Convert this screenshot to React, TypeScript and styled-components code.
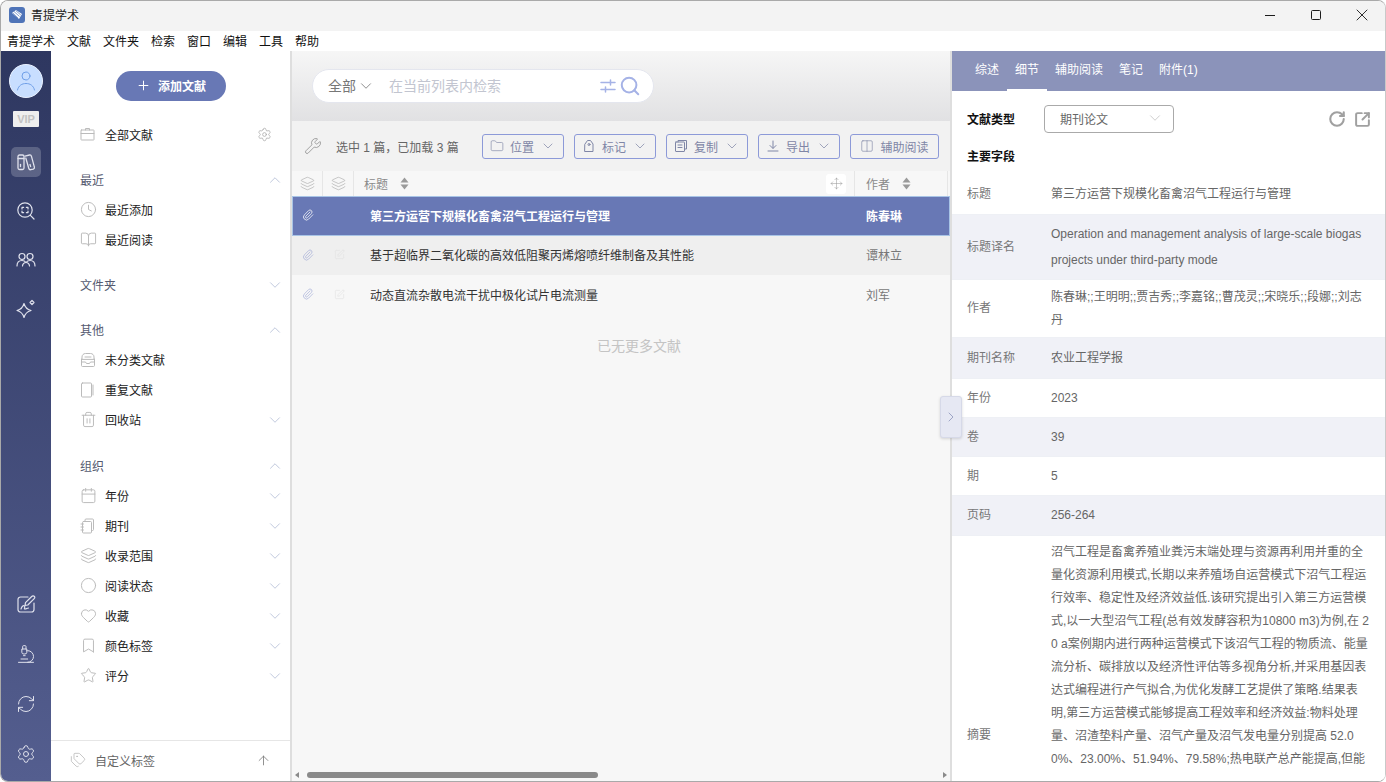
import React from "react";
import styled, { createGlobalStyle } from "styled-components";
import {
  ArrowUp,
  Bookmark,
  BookOpen,
  Calendar,
  ChevronDown,
  ChevronRight,
  ChevronUp,
  Circle,
  Clock,
  Columns2,
  Folder,
  Heart,
  Layers,
  Microscope,
  Move,
  Paperclip,
  Plus,
  RefreshCw,
  RotateCw,
  Search,
  Settings,
  SquareArrowOutUpRight,
  SquarePen,
  Star,
  Tags,
  Trash2,
  Wrench,
  X,
} from "lucide-react";

const GlobalStyle = createGlobalStyle`
  html, body {
    margin: 0;
    padding: 0;
    height: 100%;
    background: #fff;
    overflow: hidden;
  }
  body {
    font-family: "Liberation Sans", "Noto Sans CJK SC", sans-serif;
    font-size: 12px;
  }
  * { box-sizing: border-box; }
`;

const Window = styled.div`
  width: 1386px;
  height: 782px;
  display: flex;
  flex-direction: column;
  border: 1px solid #a9a9a9;
  border-right-color: #c9c9c9;
  border-radius: 8px;
  overflow: hidden;
  background: #fff;
`;

const TitleBar = styled.div`
  height: 30px;
  flex: none;
  display: flex;
  align-items: center;
  padding: 0 0 2px 8px;
  background: #f3f3f3;
  color: #222;
`;

const AppName = styled.span`
  margin: 0 0 2px 6px;
`;

const WinControls = styled.div`
  margin-left: auto;
  display: flex;
  height: 100%;
  align-items: center;
  color: #1c1c1c;
`;

const WinButton = styled.div`
  width: 46px;
  display: flex;
  justify-content: center;
`;

const MinBar = styled.div`
  width: 10px;
  height: 1px;
  background: #1c1c1c;
`;

const MaxBox = styled.div`
  width: 10px;
  height: 10px;
  border: 1px solid #1c1c1c;
  border-radius: 1.5px;
`;

const MenuBar = styled.div`
  height: 20px;
  flex: none;
  display: flex;
  align-items: center;
  gap: 12px;
  padding: 0 0 2px 6px;
  color: #111;
`;

const Body = styled.div`
  flex: 1;
  min-height: 0;
  display: flex;
  position: relative;
`;

const Rail = styled.div`
  width: 50px;
  flex: none;
  display: flex;
  flex-direction: column;
  align-items: center;
  padding-top: 13px;
  background: linear-gradient(180deg, #2e3760 0%, #545e8f 100%);
  color: #dfe1ec;
`;

const Avatar = styled.div`
  width: 34px;
  height: 34px;
  border-radius: 50%;
  background: #c8deff;
  border: 1px solid #e9f1ff;
  color: #6f9fe8;
  display: flex;
  align-items: center;
  justify-content: center;
`;

const VipBadge = styled.div`
  width: 26px;
  height: 16px;
  margin-top: 13px;
  background: #eeeeee;
  color: #c2c2c2;
  border-radius: 1px;
  font-size: 11px;
  font-weight: 700;
  line-height: 16px;
  text-align: center;
`;

const RailIcon = styled.div<{ $active?: boolean }>`
  width: 30px;
  height: 30px;
  flex: none;
  display: flex;
  align-items: center;
  justify-content: center;
  border-radius: 5px;
  background: ${(p) => (p.$active ? "rgba(255,255,255,0.2)" : "transparent")};
`;

const RailTop = styled.div`
  display: flex;
  flex-direction: column;
  align-items: center;
  gap: 19px;
  margin-top: 20px;
`;

const RailBottom = styled.div`
  margin-top: auto;
  display: flex;
  flex-direction: column;
  align-items: center;
  gap: 20px;
  padding-bottom: 12px;
`;

const Sidebar = styled.div`
  width: 241px;
  flex: none;
  display: flex;
  flex-direction: column;
  background: #fff;
  border-right: 2px solid #dedede;
`;

const SideScroll = styled.div`
  flex: 1;
  padding-top: 20px;
`;

const AddButton = styled.div`
  width: 110px;
  height: 30px;
  margin-left: 65px;
  margin-bottom: 19px;
  padding-bottom: 2px;
  border-radius: 15px;
  background: #6878b5;
  color: #fff;
  font-weight: 700;
  display: flex;
  align-items: center;
  justify-content: center;
  gap: 7px;
`;

const NavRow = styled.div<{ $head?: boolean; $gap?: number }>`
  height: 30px;
  margin-top: ${(p) => p.$gap ?? 0}px;
  display: flex;
  align-items: center;
  padding: 0 6px 1px 29px;
  color: ${(p) => (p.$head ? "#555a70" : "#222")};
`;

const NavIcon = styled.span`
  width: 25px;
  flex: none;
  display: flex;
  color: #bbbbbb;
`;

const NavEnd = styled.span<{ $tone?: string; $inset?: number }>`
  margin-left: auto;
  margin-right: ${(p) => p.$inset ?? 0}px;
  display: flex;
  color: ${(p) => p.$tone ?? "#b4bdd6"};
`;

const SideFooter = styled.div`
  height: 41px;
  flex: none;
  display: flex;
  align-items: center;
  padding: 0 19px 2px 19px;
  border-top: 1px solid #e6e6e6;
  color: #666;
`;

const FooterIcon = styled.span`
  display: flex;
  width: 25px;
  color: #b9b9b9;
`;

const FooterEnd = styled.span`
  margin-left: auto;
  display: flex;
  color: #777;
`;

const Main = styled.div`
  width: 660px;
  flex: none;
  display: flex;
  flex-direction: column;
  background: #f7f7f7;
  border-right: 2px solid #dedede;
  overflow: hidden;
`;

const SearchArea = styled.div`
  height: 70px;
  flex: none;
  padding: 18px 20px 0;
  background: linear-gradient(180deg, #f6f6f6 0%, #e1e1e3 100%);
`;

const SearchBox = styled.div`
  width: 342px;
  height: 34px;
  display: flex;
  align-items: center;
  padding: 0 12px 0 15px;
  background: #fff;
  border: 1px solid #e4e6ee;
  border-radius: 17px;
  font-size: 14px;
  font-family: "Noto Sans CJK SC", sans-serif;
`;

const ScopeText = styled.span`
  margin-bottom: 2px;
  color: #777;
`;

const ScopeChevron = styled.span`
  display: flex;
  margin: 0 14px 0 1px;
  color: #777;
`;

const Placeholder = styled.span`
  margin-bottom: 2px;
  color: #c2c5d0;
`;

const SearchIcons = styled.span`
  margin-left: auto;
  display: flex;
  align-items: center;
  gap: 3px;
  color: #a5b2e6;
`;

const Toolbar = styled.div`
  height: 50px;
  flex: none;
  display: flex;
  align-items: center;
  padding-left: 12px;
  background: #f2f2f2;
`;

const ToolIcon = styled.span`
  display: flex;
  color: #9a9a9a;
`;

const Selection = styled.span`
  width: 146px;
  margin-left: 14px;
  color: #666;
`;

const ToolButtons = styled.div`
  display: flex;
  gap: 10px;
`;

const ToolButton = styled.div<{ $w: number }>`
  width: ${(p) => p.$w}px;
  height: 25px;
  display: flex;
  align-items: center;
  justify-content: center;
  gap: 6px;
  border: 1px solid #8d9ad8;
  border-radius: 3px;
  color: #7f86a6;
`;

const TableHeader = styled.div`
  height: 25px;
  flex: none;
  display: grid;
  grid-template-columns: 31px 31px 501px 93px 1fr;
  background: #f7f7f7;
  color: #888;
`;

const HeadCell = styled.div<{ $pad?: number; $noBorder?: boolean }>`
  display: flex;
  align-items: center;
  justify-content: ${(p) => (p.$pad ? "flex-start" : "center")};
  padding-left: ${(p) => p.$pad ?? 0}px;
  padding-right: ${(p) => (p.$pad ? 8 : 0)}px;
  gap: 12px;
  border-right: ${(p) => (p.$noBorder ? "none" : "1px solid #e6e6e6")};
  color: #8a8a8a;
`;

const HeadIcon = styled.span`
  display: flex;
  color: #b0b0b0;
`;

const MoveHandle = styled.span`
  margin-left: auto;
  width: 20px;
  height: 20px;
  display: flex;
  align-items: center;
  justify-content: center;
  background: #fff;
  border-radius: 3px;
  color: #9a9a9a;
`;

const ListArea = styled.div`
  flex: 1;
  min-height: 0;
`;

const TableRow = styled.div<{ $selected?: boolean; $bg?: string; $h: number }>`
  height: ${(p) => p.$h}px;
  padding-bottom: 2px;
  display: grid;
  grid-template-columns: 31px 32px 15px 485px 1fr;
  align-items: center;
  background: ${(p) => (p.$selected ? "#6878b5" : p.$bg ?? "transparent")};
  box-shadow: ${(p) => (p.$selected ? "inset 0 0 0 1px #a8c4e6" : "none")};
  color: ${(p) => (p.$selected ? "#fff" : "#333")};
  font-weight: ${(p) => (p.$selected ? 700 : 400)};
`;

const ClipCell = styled.span<{ $selected?: boolean }>`
  display: flex;
  justify-content: center;
  color: ${(p) => (p.$selected ? "#fff" : "#9aa4d4")};
`;

const EditCell = styled.span`
  display: flex;
  justify-content: center;
  color: #e0e0e0;
`;

const TitleCell = styled.span`
  grid-column: 4;
  white-space: nowrap;
`;

const AuthorCell = styled.span<{ $selected?: boolean }>`
  padding-left: 11px;
  color: ${(p) => (p.$selected ? "#fff" : "#777")};
`;

const NoMore = styled.div`
  margin-top: 19px;
  padding-left: 36px;
  text-align: center;
  font-size: 14px;
  line-height: 22px;
  color: #c4c4c4;
  font-family: "Noto Sans CJK SC", sans-serif;
`;

const HScroll = styled.div`
  height: 11px;
  flex: none;
  display: flex;
  align-items: center;
  padding: 0 3px 1px 3px;
  color: #8a8a8a;
`;

const ScrollArrow = styled.span<{ $right?: boolean }>`
  width: 0;
  height: 0;
  border-top: 3px solid transparent;
  border-bottom: 3px solid transparent;
  border-right: ${(p) => (p.$right ? "0" : "4px solid #8a8a8a")};
  border-left: ${(p) => (p.$right ? "4px solid #8a8a8a" : "0")};
  margin-left: ${(p) => (p.$right ? "auto" : "0")};
`;

const ScrollThumb = styled.span`
  width: 291px;
  height: 6px;
  margin-left: 8px;
  border-radius: 3px;
  background: #8a8a8a;
`;

const CollapseTab = styled.div`
  position: absolute;
  left: 939px;
  top: 345px;
  width: 22px;
  height: 42px;
  display: flex;
  align-items: center;
  justify-content: center;
  background: #e6e8f3;
  border: 1px solid #d6d9e8;
  border-radius: 3px;
  box-shadow: 0 1px 3px rgba(0, 0, 0, 0.15);
  color: #8b93ba;
`;

const Detail = styled.div`
  flex: 1;
  min-width: 0;
  display: flex;
  flex-direction: column;
  overflow: hidden;
  background: #fff;
`;

const Tabs = styled.div`
  height: 40px;
  flex: none;
  display: flex;
  padding-left: 15px;
  background: #8b93ba;
`;

const Tab = styled.div<{ $active?: boolean }>`
  padding: 0 8px;
  height: 40px;
  line-height: 39px;
  color: #fff;
  border-bottom: 2px solid ${(p) => (p.$active ? "#fff" : "transparent")};
`;

const TypeRow = styled.div`
  height: 28px;
  flex: none;
  margin-top: 14px;
  display: flex;
  align-items: center;
  padding: 0 14px 0 15px;
`;

const BoldLabel = styled.span`
  margin-bottom: 2px;
  color: #111;
  font-weight: 700;
`;

const TypeSelect = styled.div`
  width: 130px;
  height: 28px;
  margin-left: 29px;
  display: flex;
  align-items: center;
  padding: 0 9px 2px 15px;
  border: 1px solid #aaa;
  border-radius: 4px;
  color: #666;
`;

const SelectChevron = styled.span`
  margin-left: auto;
  display: flex;
  color: #c4c4c4;
`;

const TypeActions = styled.div`
  margin-left: auto;
  display: flex;
  align-items: center;
  gap: 8px;
  color: #a0a0a0;
`;

const SectionTitle = styled.div`
  height: 18px;
  margin: 15px 0 8px;
  padding-left: 15px;
  line-height: 18px;
`;

const FieldRow = styled.div<{ $h: number; $shade?: boolean }>`
  height: ${(p) => p.$h}px;
  flex: none;
  display: grid;
  grid-template-columns: 84px 321px;
  align-items: center;
  padding-left: 15px;
  background: ${(p) => (p.$shade ? "#f0f1f7" : "#fff")};
  border-bottom: 1px solid #eef0f5;
`;

const FieldLabel = styled.span`
  margin-bottom: 4px;
  color: #777;
`;

const FieldValue = styled.div<{ $lh?: number; $top?: boolean; $words?: boolean }>`
  color: #666;
  line-height: ${(p) => p.$lh ?? 23}px;
  word-break: ${(p) => (p.$words ? "normal" : "break-all")};
  align-self: ${(p) => (p.$top ? "start" : "center")};
  padding-top: ${(p) => (p.$top ? 5 : 0)}px;
`;

// small hand drawn icons that the packages don't have
const s = { fill: "none", stroke: "currentColor", strokeLinecap: "round" as const, strokeLinejoin: "round" as const };

const Logo = () => (
  <svg width="16" height="16" viewBox="0 0 16 16">
    <rect width="16" height="16" rx="3" fill="#4f74b8" />
    <path d="M3 6l4-3 6 4-3 5z" fill="#fff" />
    <path d="M5 4.5l5.5 5M6.8 3.6l5 4.4M3.8 6l5 5" stroke="#4f74b8" strokeWidth=".7" />
  </svg>
);

const AvatarFigure = () => (
  <svg width="32" height="32" viewBox="0 0 32 32" {...s} strokeWidth="1">
    <circle cx="16" cy="11" r="4" />
    <path d="M7.500 25c1-4.500 4.500-6.500 8.500-6.500s7.500 2 8.500 6.500" />
  </svg>
);

const BooksIcon = () => (
  <svg width="20" height="20" viewBox="0 0 20 20" {...s} strokeWidth="1.3">
    <rect x="2" y="3" width="6" height="14.5" rx="1.5" />
    <path d="M2 6.5h6" />
    <path d="M4.5 12.5v2" />
    <path d="M9 4.2l4.5-1.2c1-.2 1.6.2 1.9 1.2l3 11c.2 1-.2 1.6-1.1 1.9l-2.6.6c-1 .2-1.6-.2-1.9-1.2l-3-10.5" />
    <path d="M14 12.5l.6 2" />
  </svg>
);

const FocusSearchIcon = () => (
  <svg width="20" height="20" viewBox="0 0 20 20" {...s} strokeWidth="1.2">
    <circle cx="9" cy="9" r="7.2" />
    <path d="M14.4 14.4L18 18" />
    <path d="M6 8V6.4h1.6M10.4 6.4H12V8M12 10v1.6h-1.6M7.6 11.6H6V10" />
  </svg>
);

const PeopleIcon = () => (
  <svg width="20" height="20" viewBox="0 0 20 20" {...s} strokeWidth="1.2">
    <circle cx="6" cy="6.5" r="3" />
    <circle cx="14" cy="6.5" r="3" />
    <path d="M1 16c0-3.5 2-5.5 5-5.5 1.700 0 3 .6 4 2 1-1.400 2.300-2 4-2 3 0 5 2 5 5.500" />
    <path d="M6.500 16c0-1.500 1.400-3.500 3.500-3.500s3.500 2 3.500 3.500" />
  </svg>
);

const SparkIcon = () => (
  <svg width="20" height="20" viewBox="0 0 20 20" {...s} strokeWidth="1.2">
    <path d="M8 4.500c1 3.700 3.300 6 7 7-3.700 1-6 3.300-7 7-1-3.700-3.300-6-7-7 3.700-1 6-3.300 7-7z" />
    <path d="M16 1.500l2 2-2 2-2-2z" />
  </svg>
);

const SketchIcon = () => (
  <svg width="20" height="20" viewBox="0 0 20 20" {...s} strokeWidth="1.2">
    <path d="M12 3H4.500A2.500 2.500 0 0 0 2 5.500v10A2.500 2.500 0 0 0 4.500 18h11a2.500 2.500 0 0 0 2.500-2.500V9" />
    <path d="M18.500 2.500c-1-1-2-.8-2.800 0L9.500 8.700 9 11.500l2.800-.5 6.200-6.200c.8-.8 1.300-1.300.5-2.300z" />
    <path d="M5 15c1-3 2.500-4 3.500-3s-1 3 .5 3 2-1 3.500-1" />
  </svg>
);

const BriefcaseIcon = () => (
  <svg width="15" height="15" viewBox="0 0 15 15" {...s} strokeWidth="1">
    <rect x="1" y="3" width="13" height="10" rx=".5" />
    <path d="M1 6.500h13" />
    <path d="M5.500 3V1.500h4V3" />
  </svg>
);

const InboxIcon = () => (
  <svg width="16" height="16" viewBox="0 0 16 16" {...s} strokeWidth="1">
    <path d="M2 7V5c0-2 1.500-3.500 3.500-3.500h5C12.500 1.500 14 3 14 5v2z" />
    <path d="M1.500 7v3h4l1 1.500h3l1-1.500h4V7" />
    <path d="M1.500 10v3.500c0 .6.400 1 1 1h11c.6 0 1-.4 1-1V10" />
    <path d="M5 5h6" />
  </svg>
);

const DocIcon = () => (
  <svg width="15" height="16" viewBox="0 0 15 16" {...s} strokeWidth="1">
    <rect x="1.500" y="1" width="10" height="14" rx="1" />
    <path d="M13 3v10" />
  </svg>
);

const JournalIcon = () => (
  <svg width="15" height="16" viewBox="0 0 15 16" {...s} strokeWidth="1">
    <rect x="2.500" y="3.500" width="9" height="11.500" rx="1" />
    <path d="M5 3.500V2c0-.6.400-1 1-1h6.500c.6 0 1 .4 1 1v9.500c0 .6-.4 1-1 1h-1" />
    <path d="M1 6h2.500M1 9h2.500M1 12h2.500" />
  </svg>
);

const TagUpIcon = () => (
  <svg width="14" height="14" viewBox="0 0 14 14" {...s} strokeWidth="1">
    <path d="M3 5l2.500-3.500h3L11 5v7.500H3z" />
    <circle cx="7" cy="5.500" r="1" />
  </svg>
);

const CopyDocIcon = () => (
  <svg width="14" height="14" viewBox="0 0 14 14" {...s} strokeWidth="1">
    <rect x="1.500" y="3" width="9" height="9.500" rx=".5" />
    <path d="M4 3V1.500h8.500V10H10.500" />
    <path d="M4 6h4M4 8.500h4" />
  </svg>
);

const ExportIcon = () => (
  <svg width="14" height="14" viewBox="0 0 14 14" {...s} strokeWidth="1">
    <path d="M7 2v7M4 6.500L7 9.500l3-3" />
    <path d="M2 12h10" />
  </svg>
);

const SlidersIcon = () => (
  <svg width="16" height="16" viewBox="0 0 16 16" {...s} strokeWidth="1.500">
    <path d="M1 4.500h14M1 11.500h14" />
    <path d="M10.500 2v5M5.500 9v5" />
  </svg>
);

const SortCaret = () => (
  <svg width="9" height="13" viewBox="0 0 9 13">
    <path d="M4.500 0.500L8.500 5.500H0.500z" fill="#9a9a9a" />
    <path d="M4.500 12.500L0.500 7.500H8.500z" fill="#9a9a9a" />
  </svg>
);

const navIcon = { size: 17, strokeWidth: 1.4 };
const chevron = { size: 18, strokeWidth: 1.1 };
const btnChevron = { size: 16, strokeWidth: 1.1 };

type NavItem = { label: string; icon: React.ReactNode; fold?: boolean };

const otherItems: NavItem[] = [
  { label: "未分类文献", icon: <InboxIcon /> },
  { label: "重复文献", icon: <DocIcon /> },
  { label: "回收站", icon: <Trash2 {...navIcon} />, fold: true },
];

const orgItems: NavItem[] = [
  { label: "年份", icon: <Calendar {...navIcon} />, fold: true },
  { label: "期刊", icon: <JournalIcon />, fold: true },
  { label: "收录范围", icon: <Layers {...navIcon} />, fold: true },
  { label: "阅读状态", icon: <Circle {...navIcon} />, fold: true },
  { label: "收藏", icon: <Heart {...navIcon} />, fold: true },
  { label: "颜色标签", icon: <Bookmark {...navIcon} />, fold: true },
  { label: "评分", icon: <Star {...navIcon} />, fold: true },
];

const menus = ["青提学术", "文献", "文件夹", "检索", "窗口", "编辑", "工具", "帮助"];
const tabs = ["综述", "细节", "辅助阅读", "笔记", "附件(1)"];

const abstractText =
  "沼气工程是畜禽养殖业粪污末端处理与资源再利用并重的全量化资源利用模式,长期以来养殖场自运营模式下沼气工程运行效率、稳定性及经济效益低.该研究提出引入第三方运营模式,以一大型沼气工程(总有效发酵容积为10800 m3)为例,在 20 a案例期内进行两种运营模式下该沼气工程的物质流、能量流分析、碳排放以及经济性评估等多视角分析,并采用基因表达式编程进行产气拟合,为优化发酵工艺提供了策略.结果表明,第三方运营模式能够提高工程效率和经济效益:物料处理量、沼渣垫料产量、沼气产量及沼气发电量分别提高 52.00%、23.00%、51.94%、79.58%;热电联产总产能提高,但能";

function NavList({ items }: { items: NavItem[] }) {
  return (
    <>
      {items.map((item) => (
        <NavRow key={item.label}>
          <NavIcon>{item.icon}</NavIcon>
          {item.label}
          {item.fold && (
            <NavEnd>
              <ChevronDown {...chevron} />
            </NavEnd>
          )}
        </NavRow>
      ))}
    </>
  );
}

function App() {
  return (
    <>
      <GlobalStyle />
      <Window>
        <TitleBar>
          <Logo />
          <AppName>青提学术</AppName>
          <WinControls>
            <WinButton>
              <MinBar />
            </WinButton>
            <WinButton>
              <MaxBox />
            </WinButton>
            <WinButton>
              <X size={20} strokeWidth={1.1} />
            </WinButton>
          </WinControls>
        </TitleBar>
        <MenuBar>
          {menus.map((m) => (
            <span key={m}>{m}</span>
          ))}
        </MenuBar>
        <Body>
          <Rail>
            <Avatar>
              <AvatarFigure />
            </Avatar>
            <VipBadge>VIP</VipBadge>
            <RailTop>
              <RailIcon $active>
                <BooksIcon />
              </RailIcon>
              <RailIcon>
                <FocusSearchIcon />
              </RailIcon>
              <RailIcon>
                <PeopleIcon />
              </RailIcon>
              <RailIcon>
                <SparkIcon />
              </RailIcon>
            </RailTop>
            <RailBottom>
              <RailIcon>
                <SketchIcon />
              </RailIcon>
              <RailIcon>
                <Microscope size={20} strokeWidth={1.2} />
              </RailIcon>
              <RailIcon>
                <RefreshCw size={20} strokeWidth={1.2} />
              </RailIcon>
              <RailIcon>
                <Settings size={20} strokeWidth={1.2} />
              </RailIcon>
            </RailBottom>
          </Rail>

          <Sidebar>
            <SideScroll>
              <AddButton>
                <Plus size={15} strokeWidth={1.6} />
                添加文献
              </AddButton>
              <NavRow>
                <NavIcon>
                  <BriefcaseIcon />
                </NavIcon>
                全部文献
                <NavEnd $tone="#a8a8a8" $inset={12}>
                  <Settings size={15} strokeWidth={1.2} />
                </NavEnd>
              </NavRow>
              <NavRow $head $gap={15}>
                最近
                <NavEnd>
                  <ChevronUp {...chevron} />
                </NavEnd>
              </NavRow>
              <NavRow>
                <NavIcon>
                  <Clock {...navIcon} />
                </NavIcon>
                最近添加
              </NavRow>
              <NavRow>
                <NavIcon>
                  <BookOpen {...navIcon} />
                </NavIcon>
                最近阅读
              </NavRow>
              <NavRow $head $gap={15}>
                文件夹
                <NavEnd>
                  <ChevronDown {...chevron} />
                </NavEnd>
              </NavRow>
              <NavRow $head $gap={15}>
                其他
                <NavEnd>
                  <ChevronUp {...chevron} />
                </NavEnd>
              </NavRow>
              <NavList items={otherItems} />
              <NavRow $head $gap={16}>
                组织
                <NavEnd>
                  <ChevronUp {...chevron} />
                </NavEnd>
              </NavRow>
              <NavList items={orgItems} />
            </SideScroll>
            <SideFooter>
              <FooterIcon>
                <Tags size={16} strokeWidth={1.2} />
              </FooterIcon>
              自定义标签
              <FooterEnd>
                <ArrowUp size={15} strokeWidth={1.3} />
              </FooterEnd>
            </SideFooter>
          </Sidebar>

          <Main>
            <SearchArea>
              <SearchBox>
                <ScopeText>全部</ScopeText>
                <ScopeChevron>
                  <ChevronDown size={18} strokeWidth={1.1} />
                </ScopeChevron>
                <Placeholder>在当前列表内检索</Placeholder>
                <SearchIcons>
                  <SlidersIcon />
                  <Search size={22} strokeWidth={2.2} />
                </SearchIcons>
              </SearchBox>
            </SearchArea>
            <Toolbar>
              <ToolIcon>
                <Wrench size={18} strokeWidth={1.2} />
              </ToolIcon>
              <Selection>选中 1 篇，已加载 3 篇</Selection>
              <ToolButtons>
                <ToolButton $w={82}>
                  <Folder size={14} strokeWidth={1.1} />
                  位置
                  <ChevronDown {...btnChevron} />
                </ToolButton>
                <ToolButton $w={82}>
                  <TagUpIcon />
                  标记
                  <ChevronDown {...btnChevron} />
                </ToolButton>
                <ToolButton $w={82}>
                  <CopyDocIcon />
                  复制
                  <ChevronDown {...btnChevron} />
                </ToolButton>
                <ToolButton $w={82}>
                  <ExportIcon />
                  导出
                  <ChevronDown {...btnChevron} />
                </ToolButton>
                <ToolButton $w={89}>
                  <Columns2 size={14} strokeWidth={1.1} />
                  辅助阅读
                </ToolButton>
              </ToolButtons>
            </Toolbar>
            <TableHeader>
              <HeadCell>
                <HeadIcon>
                  <Layers size={15} strokeWidth={1.1} />
                </HeadIcon>
              </HeadCell>
              <HeadCell>
                <HeadIcon>
                  <Layers size={15} strokeWidth={1.1} />
                </HeadIcon>
              </HeadCell>
              <HeadCell $pad={10}>
                标题
                <SortCaret />
                <MoveHandle>
                  <Move size={13} strokeWidth={1} />
                </MoveHandle>
              </HeadCell>
              <HeadCell $pad={11}>
                作者
                <SortCaret />
              </HeadCell>
              <HeadCell $noBorder />
            </TableHeader>
            <ListArea>
              <TableRow $selected $h={40}>
                <ClipCell $selected>
                  <Paperclip size={12} strokeWidth={1.5} />
                </ClipCell>
                <span />
                <TitleCell>第三方运营下规模化畜禽沼气工程运行与管理</TitleCell>
                <AuthorCell $selected>陈春琳</AuthorCell>
              </TableRow>
              <TableRow $h={39} $bg="#efefef">
                <ClipCell>
                  <Paperclip size={12} strokeWidth={1.2} />
                </ClipCell>
                <EditCell>
                  <SquarePen size={11} strokeWidth={1.2} />
                </EditCell>
                <TitleCell>基于超临界二氧化碳的高效低阻聚丙烯熔喷纤维制备及其性能</TitleCell>
                <AuthorCell>谭林立</AuthorCell>
              </TableRow>
              <TableRow $h={40}>
                <ClipCell>
                  <Paperclip size={12} strokeWidth={1.2} />
                </ClipCell>
                <EditCell>
                  <SquarePen size={11} strokeWidth={1.2} />
                </EditCell>
                <TitleCell>动态直流杂散电流干扰中极化试片电流测量</TitleCell>
                <AuthorCell>刘军</AuthorCell>
              </TableRow>
              <NoMore>已无更多文献</NoMore>
            </ListArea>
            <HScroll>
              <ScrollArrow />
              <ScrollThumb />
              <ScrollArrow $right />
            </HScroll>
          </Main>

          <CollapseTab>
            <ChevronRight size={16} strokeWidth={1.2} />
          </CollapseTab>

          <Detail>
            <Tabs>
              {tabs.map((t) => (
                <Tab key={t} $active={t === "细节"}>
                  {t}
                </Tab>
              ))}
            </Tabs>
            <TypeRow>
              <BoldLabel>文献类型</BoldLabel>
              <TypeSelect>
                期刊论文
                <SelectChevron>
                  <ChevronDown size={18} strokeWidth={1.1} />
                </SelectChevron>
              </TypeSelect>
              <TypeActions>
                <RotateCw size={18} strokeWidth={2.8} />
                <SquareArrowOutUpRight size={17} strokeWidth={2.8} />
              </TypeActions>
            </TypeRow>
            <SectionTitle>
              <BoldLabel>主要字段</BoldLabel>
            </SectionTitle>
            <FieldRow $h={41}>
              <FieldLabel>标题</FieldLabel>
              <FieldValue>第三方运营下规模化畜禽沼气工程运行与管理</FieldValue>
            </FieldRow>
            <FieldRow $h={65} $shade>
              <FieldLabel>标题译名</FieldLabel>
              <FieldValue $lh={26} $words>
                Operation and management analysis of large-scale biogas projects under third-party mode
              </FieldValue>
            </FieldRow>
            <FieldRow $h={58}>
              <FieldLabel>作者</FieldLabel>
              <FieldValue>陈春琳;;王明明;;贾吉秀;;李嘉铭;;曹茂灵;;宋晓乐;;段娜;;刘志丹</FieldValue>
            </FieldRow>
            <FieldRow $h={41} $shade>
              <FieldLabel>期刊名称</FieldLabel>
              <FieldValue>农业工程学报</FieldValue>
            </FieldRow>
            <FieldRow $h={39}>
              <FieldLabel>年份</FieldLabel>
              <FieldValue>2023</FieldValue>
            </FieldRow>
            <FieldRow $h={39} $shade>
              <FieldLabel>卷</FieldLabel>
              <FieldValue>39</FieldValue>
            </FieldRow>
            <FieldRow $h={39}>
              <FieldLabel>期</FieldLabel>
              <FieldValue>5</FieldValue>
            </FieldRow>
            <FieldRow $h={40} $shade>
              <FieldLabel>页码</FieldLabel>
              <FieldValue>256-264</FieldValue>
            </FieldRow>
            <FieldRow $h={400}>
              <FieldLabel>摘要</FieldLabel>
              <FieldValue $top>{abstractText}</FieldValue>
            </FieldRow>
          </Detail>
        </Body>
      </Window>
    </>
  );
}

export default App;
